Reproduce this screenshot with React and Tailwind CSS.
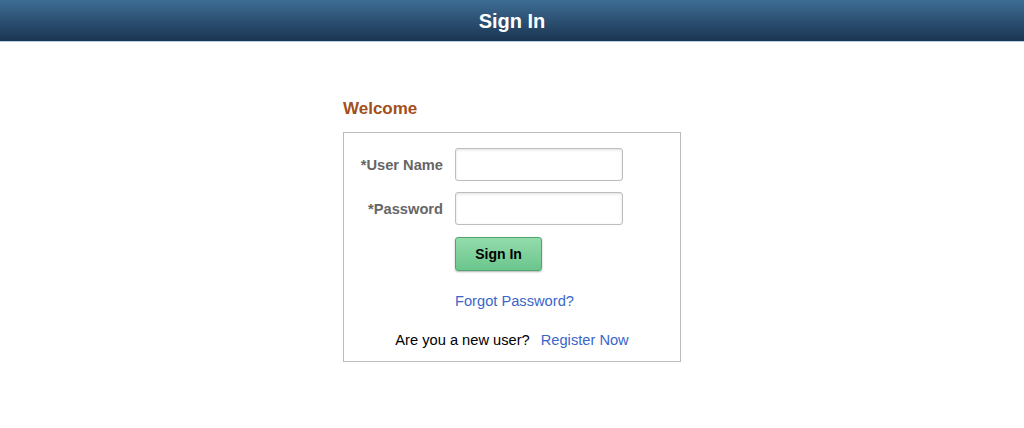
import React, { useState } from "react";

const SignInPage = () => {
  const [userId, setUserId] = useState("");
  const [password, setPassword] = useState("");

  // Nothing to submit to here, keep the form quiet
  const handleSubmit = (e) => {
    e.preventDefault();
  };

  return (
    <div className="min-h-screen bg-white font-['Liberation_Sans',Arial,sans-serif]">
      {/* Top banner */}
      <div className="h-[41px] bg-gradient-to-b from-[#3e6d95] to-[#1b3552] border-b border-[#b3cfe6] flex items-center justify-center box-content">
        <h1 className="text-white text-[20px] font-bold leading-none">Sign In</h1>
      </div>

      <div className="w-[338px] mx-auto mt-[57px]">
        <h2 className="text-[#a24f1b] text-[17px] font-bold leading-[20px] mb-[13px]">Welcome</h2>

        <form onSubmit={handleSubmit} className="border border-[#bcbcbc] pt-[15px] pb-[12px]">
          <div className="flex items-center">
            <label htmlFor="userid" className="w-[99px] text-right text-[#666] text-[14.67px] font-bold">
              *User Name
            </label>
            <input
              id="userid"
              type="text"
              value={userId}
              onChange={(e) => setUserId(e.target.value)}
              className="ml-3 w-[168px] h-[33px] border border-[#bdbdbd] rounded-[3px] bg-white shadow-[inset_0_1px_3px_rgba(0,0,0,0.12)] outline-none px-2"
            />
          </div>

          <div className="flex items-center mt-[11px]">
            <label htmlFor="pwd" className="w-[99px] text-right text-[#666] text-[14.67px] font-bold">
              *Password
            </label>
            <input
              id="pwd"
              type="password"
              value={password}
              onChange={(e) => setPassword(e.target.value)}
              className="ml-3 w-[168px] h-[33px] border border-[#bdbdbd] rounded-[3px] bg-white shadow-[inset_0_1px_3px_rgba(0,0,0,0.12)] outline-none px-2"
            />
          </div>

          <div className="pl-[111px] mt-[12px]">
            <button
              type="submit"
              className="w-[87px] h-[34px] border border-[#4fa56e] rounded-[3px] bg-gradient-to-b from-[#93dcac] to-[#6bc58c] shadow-[0_1px_2px_rgba(0,0,0,0.3)] text-black text-[14px] font-bold"
            >
              Sign In
            </button>
          </div>

          <div className="pl-[111px] mt-[21px] leading-[18px]">
            <a href="#" className="text-[#3a66c9] text-[14.67px]">Forgot Password?</a>
          </div>

          <div className="flex justify-center items-center gap-[11px] mt-[21px] leading-[18px]">
            <span className="text-black text-[14.67px]">Are you a new user?</span>
            <a href="#" className="text-[#3a66c9] text-[14.67px]">Register Now</a>
          </div>
        </form>
      </div>
    </div>
  );
};

export default SignInPage;
